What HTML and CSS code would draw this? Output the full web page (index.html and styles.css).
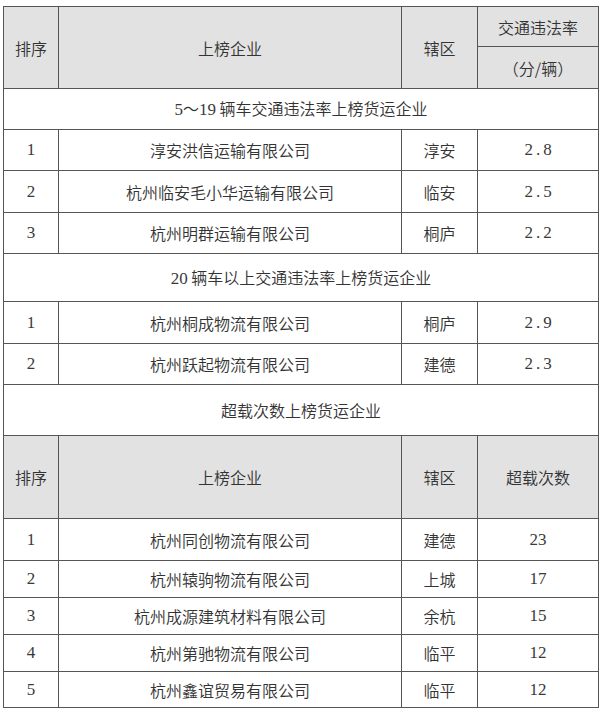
FILE: index.html
```html
<!DOCTYPE html>
<html lang="zh">
<head>
<meta charset="utf-8">
<link rel="stylesheet" href="styles.css">
</head>
<body>
<table class="rank">
  <colgroup>
    <col class="c-no"><col class="c-name"><col class="c-area"><col class="c-val">
  </colgroup>
  <tr class="h-a">
    <td class="head" rowspan="2">排序</td>
    <td class="head" rowspan="2">上榜企业</td>
    <td class="head" rowspan="2">辖区</td>
    <td class="head">交通违法率</td>
  </tr>
  <tr class="h-b">
    <td class="head">（分/辆）</td>
  </tr>
  <tr class="sec s1"><td colspan="4"><span class="num">5</span>～<span class="num">19</span> 辆车交通违法率上榜货运企业</td></tr>
  <tr class="r41"><td class="num">1</td><td>淳安洪信运输有限公司</td><td>淳安</td><td class="num dec">2.8</td></tr>
  <tr class="r42"><td class="num">2</td><td>杭州临安毛小华运输有限公司</td><td>临安</td><td class="num dec">2.5</td></tr>
  <tr class="r41"><td class="num">3</td><td>杭州明群运输有限公司</td><td>桐庐</td><td class="num dec">2.2</td></tr>
  <tr class="sec s2"><td colspan="4"><span class="num">20</span> 辆车以上交通违法率上榜货运企业</td></tr>
  <tr class="r42"><td class="num">1</td><td>杭州桐成物流有限公司</td><td>桐庐</td><td class="num dec">2.9</td></tr>
  <tr class="r41"><td class="num">2</td><td>杭州跃起物流有限公司</td><td>建德</td><td class="num dec">2.3</td></tr>
  <tr class="sec s3"><td colspan="4">超载次数上榜货运企业</td></tr>
  <tr class="h-c">
    <td class="head">排序</td>
    <td class="head">上榜企业</td>
    <td class="head">辖区</td>
    <td class="head">超载次数</td>
  </tr>
  <tr class="r42"><td class="num">1</td><td>杭州同创物流有限公司</td><td>建德</td><td class="num">23</td></tr>
  <tr class="r37"><td class="num">2</td><td>杭州辕驹物流有限公司</td><td>上城</td><td class="num">17</td></tr>
  <tr class="r37"><td class="num">3</td><td>杭州成源建筑材料有限公司</td><td>余杭</td><td class="num">15</td></tr>
  <tr class="r37"><td class="num">4</td><td>杭州第驰物流有限公司</td><td>临平</td><td class="num">12</td></tr>
  <tr class="r36"><td class="num">5</td><td>杭州鑫谊贸易有限公司</td><td>临平</td><td class="num">12</td></tr>
</table>
</body>
</html>
```

FILE: styles.css
```css
html, body {
  margin: 0;
  padding: 0;
  background: #ffffff;
}
body {
  padding: 6px 0 0 3px;
  font-family: "Noto Sans CJK SC", sans-serif;
  font-size: 16px;
  color: #333333;
}
.rank {
  border-collapse: collapse;
  width: 595px;
  table-layout: fixed;
}
.c-no { width: 55px; }
.c-name { width: 343px; }
.c-area { width: 76px; }
.c-val { width: 121px; }
.rank td {
  border: 1px solid #555555;
  text-align: center;
  vertical-align: middle;
  padding: 0;
  line-height: 20px;
  font-weight: 350;
}
.rank td.head {
  background: #e2e2e2;
}
.num {
  font-family: "Liberation Serif", "Noto Sans CJK SC", serif;
  font-size: 17px;
  font-weight: 400;
  color: #3a3a3a;
}
.rank td.num { font-weight: 400; }
.dec { letter-spacing: 3px; text-indent: 3px; }
.h-a { height: 40px; }
.h-b { height: 42px; }
.s1 { height: 41px; }
.s2 { height: 48px; }
.s3 { height: 51px; }
.h-c { height: 83px; }
.r41 { height: 41px; }
.r42 { height: 42px; }
.r37 { height: 37px; }
.r36 { height: 36px; }
```
